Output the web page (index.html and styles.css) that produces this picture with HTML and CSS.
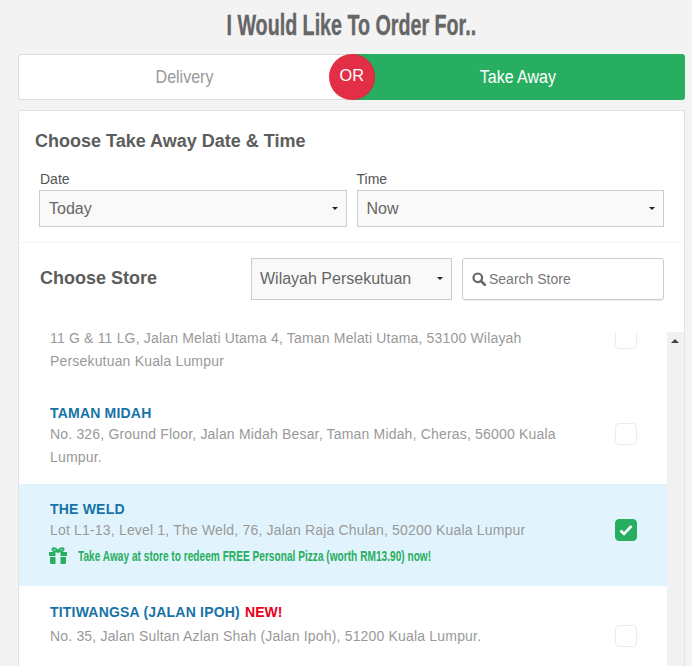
FILE: index.html
```html
<!DOCTYPE html>
<html lang="en">
<head>
    <meta charset="UTF-8">
    <title>Order</title>
    <link rel="stylesheet" href="styles.css">
</head>
<body>
    <h1 class="page-title"><span>I Would Like To Order For..</span></h1>

    <div class="toggle">
        <div class="toggle-side"><span class="narrow">Delivery</span></div>
        <div class="toggle-side active"><span class="narrow">Take Away</span></div>
        <div class="toggle-or"><span class="narrow">OR</span></div>
    </div>

    <div class="panel">
        <div class="date-section">
            <h2 class="section-title">Choose Take Away Date &amp; Time</h2>
            <div class="date-row">
                <div class="field">
                    <label class="field-label">Date</label>
                    <div class="select select-tall">Today<i class="caret"></i></div>
                </div>
                <div class="field">
                    <label class="field-label">Time</label>
                    <div class="select select-tall">Now<i class="caret"></i></div>
                </div>
            </div>
        </div>

        <div class="store-bar">
            <h2 class="store-title">Choose Store</h2>
            <div class="select select-state">Wilayah Persekutuan<i class="caret"></i></div>
            <div class="search">
                <svg class="search-icon" viewBox="0 0 14 14" width="14" height="14">
                    <circle cx="5.8" cy="5.8" r="4.3" fill="none" stroke="#666" stroke-width="2.2"/>
                    <path d="M9 9l4 4" stroke="#666" stroke-width="2.6" stroke-linecap="round"/>
                </svg>
                <span>Search Store</span>
            </div>
        </div>

        <div class="list-wrap">
            <div class="store-list">
                <div class="store store-clipped">
                    <div class="store-info">
                        <p class="store-address">11 G &amp; 11 LG, Jalan Melati Utama 4, Taman Melati Utama, 53100 Wilayah Persekutuan Kuala Lumpur</p>
                    </div>
                    <div class="check"></div>
                </div>
                <div class="store store-mid">
                    <div class="store-info">
                        <div class="store-name">TAMAN MIDAH</div>
                        <p class="store-address">No. 326, Ground Floor, Jalan Midah Besar, Taman Midah, Cheras, 56000 Kuala Lumpur.</p>
                    </div>
                    <div class="check"></div>
                </div>
                <div class="store selected">
                    <div class="store-info">
                        <div class="store-name">THE WELD</div>
                        <p class="store-address">Lot L1-13, Level 1, The Weld, 76, Jalan Raja Chulan, 50200 Kuala Lumpur</p>
                        <div class="promo">
                            <svg class="gift" viewBox="0 0 18 17" width="18" height="17">
                                <path fill="#27ae60" d="M0 5h6.500v4H0zM11.500 5H18v4h-6.500zM1 10h5.500v7H2.500Q1 17 1 15.500zM11.500 10H17v5.500q0 1.500-1.500 1.500h-4z"/>
                                <path fill="none" stroke="#27ae60" stroke-width="2" d="M9 4.500C7 .5 3.500.5 3.500 2.500S6 4.500 9 4.500C12 4.500 14.500 4.500 14.500 2.500S11 .5 9 4.500z"/>
                            </svg>
                            <span class="promo-text">Take Away at store to redeem FREE Personal Pizza (worth RM13.90) now!</span>
                        </div>
                    </div>
                    <div class="check checked">
                        <svg viewBox="0 0 14 12" width="14" height="12">
                            <path d="M1.500 6.500l3.500 3.500 7.500-8" fill="none" stroke="#fff" stroke-width="2.600"/>
                        </svg>
                    </div>
                </div>
                <div class="store store-last">
                    <div class="store-info">
                        <div class="store-name">TITIWANGSA (JALAN IPOH) <b class="new-tag">NEW!</b></div>
                        <p class="store-address">No. 35, Jalan Sultan Azlan Shah (Jalan Ipoh), 51200 Kuala Lumpur.</p>
                    </div>
                    <div class="check"></div>
                </div>
            </div>
            <div class="scrollbar"><i class="scroll-up"></i></div>
        </div>
    </div>
</body>
</html>
```

FILE: styles.css
```css
* {
    box-sizing: border-box;
}
html, body {
    height: 666px;
    overflow: hidden;
}
body {
    margin: 0;
    padding: 0 7px 0 18px;
    background-color: #f3f3f3;
    font-family: "Liberation Sans", Arial, sans-serif;
    color: #5c5c5c;
}
.page-title {
    margin: 0;
    height: 54px;
    padding-top: 7px;
    text-align: center;
    font-size: 30px;
    line-height: 36px;
    font-weight: bold;
    color: #666;
}
.page-title span {
    display: inline-block;
    transform: scaleX(0.656);
    white-space: nowrap;
    -webkit-text-stroke: 0.4px #666;
}
.narrow {
    display: inline-block;
    transform: scaleX(0.89);
}
.toggle {
    position: relative;
    display: flex;
    height: 46px;
    margin-bottom: 10px;
}
.toggle-side {
    flex: 1;
    display: flex;
    align-items: center;
    justify-content: center;
    padding-right: 1px;
    background-color: #fff;
    border: 1px solid #ddd;
    border-right: none;
    border-radius: 3px 0 0 3px;
    color: #999;
    font-size: 18px;
}
.toggle-side.active {
    background-color: #27ae60;
    border: none;
    border-radius: 0 3px 3px 0;
    color: #fff;
}
.toggle-or {
    position: absolute;
    left: 311px;
    top: 0;
    width: 46px;
    height: 46px;
    border-radius: 50%;
    background-color: #e32f45;
    box-shadow: inset -1px 0 0 #c9303f;
    color: #fff;
    font-size: 17px;
    line-height: 44px;
    text-align: center;
}
.toggle-or .narrow {
    transform: scaleX(0.96);
}
.panel {
    background-color: #fff;
    border: 1px solid #e2e2e2;
    border-bottom: none;
    border-radius: 3px 3px 0 0;
    height: 556px;
    overflow: hidden;
}
.date-section {
    height: 132px;
    padding: 18px 20px 0 20px;
    border-bottom: 1px solid #f6f6f6;
}
.section-title {
    margin: 0 0 18px -4px;
    font-size: 18px;
    line-height: 24px;
    color: #5c5c5c;
}
.date-row {
    display: flex;
    gap: 10px;
}
.field {
    flex: 1;
}
.field-label {
    display: block;
    padding-left: 1px;
    font-size: 14px;
    line-height: 16px;
    margin-bottom: 3px;
    color: #555;
}
.field + .field .field-label {
    padding-left: 0;
}
.select {
    display: flex;
    align-items: center;
    justify-content: space-between;
    padding: 0 9px;
    background-color: #f9f9f9;
    border: 1px solid #ccc;
    font-size: 16px;
    color: #666;
}
.select-tall {
    height: 37px;
}
.caret {
    width: 0;
    height: 0;
    border-left: 3px solid transparent;
    border-right: 3px solid transparent;
    border-top: 3px solid #222;
    margin-right: -1px;
}
.store-bar {
    display: flex;
    align-items: center;
    height: 89px;
    padding: 0 20px 18px 21px;
}
.store-title {
    margin: 0;
    width: 211px;
    font-size: 18px;
    color: #5c5c5c;
}
.select-state {
    width: 201px;
    height: 42px;
    margin-right: 10px;
    padding-left: 8px;
}
.search {
    flex: 1;
    display: flex;
    align-items: center;
    gap: 3px;
    height: 42px;
    padding-left: 9px;
    border: 1px solid #ccc;
    border-radius: 3px;
    box-shadow: 0 1px 1px rgba(0, 0, 0, 0.08);
    font-size: 14px;
    color: #777;
}
.list-wrap {
    display: flex;
    height: 335px;
}
.store-list {
    flex: 1;
    overflow: hidden;
    min-width: 0;
}
.scrollbar {
    width: 17px;
    flex-shrink: 0;
    background-color: #f1f1f1;
    padding: 7px 0 0 4px;
}
.scroll-up {
    display: block;
    width: 0;
    height: 0;
    border-left: 4px solid transparent;
    border-right: 4px solid transparent;
    border-bottom: 4px solid #444;
}
.store {
    display: flex;
    align-items: flex-start;
    padding: 16px 30px 0 31px;
}
.store-clipped {
    height: 56px;
    padding-top: 0;
}
.store-clipped .store-info {
    margin-top: -5px;
}
.store-clipped .check {
    margin-top: -5px;
}
.store-mid {
    height: 96px;
    padding-top: 15px;
}
.store-mid .check {
    margin-top: 20px;
}
.store.selected {
    height: 102px;
    padding-top: 15px;
    background-color: #e1f4fd;
}
.selected .check {
    margin-top: 20px;
}
.store-last .check {
    margin-top: 23px;
}
.store-last .store-name {
    margin-bottom: 3px;
}
.store-info {
    flex: 1;
    min-width: 0;
}
.store-name {
    font-size: 14px;
    font-weight: bold;
    line-height: 20px;
    letter-spacing: 0.2px;
    color: #1673a6;
}
.new-tag {
    color: #e8001c;
    margin-left: 1px;
    letter-spacing: 0;
}
.store-address {
    margin: 0;
    font-size: 14px;
    line-height: 23px;
    letter-spacing: 0.18px;
    color: #999;
    width: 530px;
}
.promo {
    display: flex;
    align-items: center;
    height: 24px;
    margin-top: 1px;
    margin-left: -1px;
}
.gift {
    flex-shrink: 0;
}
.promo-text {
    display: inline-block;
    transform: scaleX(0.676);
    transform-origin: left center;
    margin-left: 11px;
    white-space: nowrap;
    font-size: 15px;
    font-weight: bold;
    color: #27ae60;
}
.check {
    flex-shrink: 0;
    width: 22px;
    height: 22px;
    border: 1px solid #ececec;
    border-radius: 4px;
    background-color: #fff;
    display: flex;
    align-items: center;
    justify-content: center;
}
.check.checked {
    background-color: #27ae60;
    border-color: #27ae60;
}
```
